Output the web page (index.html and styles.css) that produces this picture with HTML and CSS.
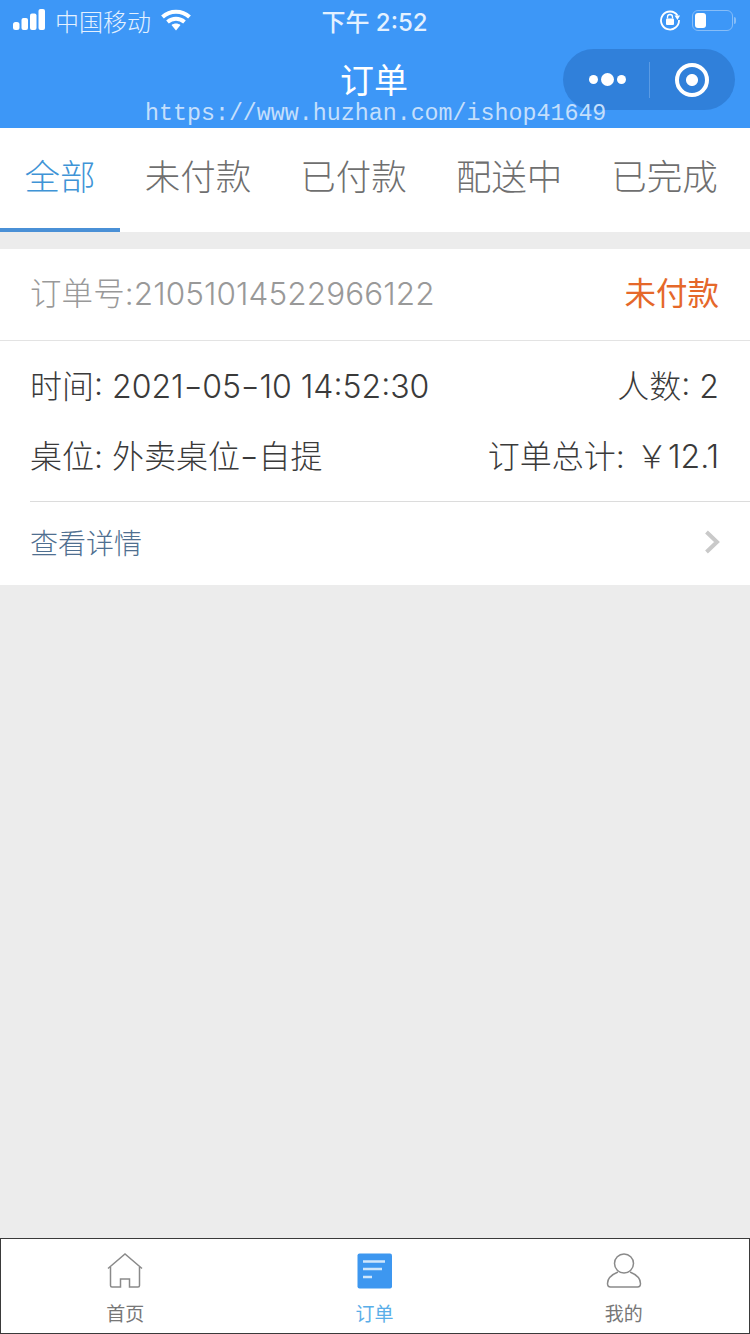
FILE: index.html
```html
<!DOCTYPE html>
<html lang="zh-CN">
<head>
    <meta charset="UTF-8">
    <meta name="viewport" content="width=device-width, initial-scale=1.0">
    <title>订单</title>
    <link rel="stylesheet" href="styles.css">
</head>
<body>
    <header class="top">
        <div class="status-bar">
            <div class="status-left">
                <svg class="signal" width="34" height="22" viewBox="0 0 34 22">
                    <rect x="0" y="13" width="6.500" height="8" rx="2.500" />
                    <rect x="8.500" y="9" width="6.500" height="12" rx="2" />
                    <rect x="17" y="4.500" width="6.500" height="16.500" rx="2" />
                    <rect x="25.500" y="0" width="6.500" height="21" rx="2" />
                </svg>
                <span>中国移动</span>
                <svg class="wifi" width="30" height="22" viewBox="0 0 30 22">
                    <path d="M1.500 8C9 1 21 1 28.500 8" />
                    <path d="M6.500 13C11.500 8.700 18.500 8.700 23.500 13" />
                    <path class="wifi-tip" d="M10.500 16C13 14 17 14 19.500 16L15 21.500Z" />
                </svg>
            </div>
            <div class="status-time">下午 2:52</div>
            <div class="status-right">
                <svg width="22" height="22" viewBox="0 0 22 22">
                    <path class="lock-ring" d="M18.500 6.500A9 9 0 1 0 20 11" />
                    <path class="lock-arrow" d="M15.500 6.500H21L18.500 11Z" />
                    <rect class="lock-body" x="7" y="9.500" width="8" height="6.500" rx="1" />
                    <path class="lock-ring thin" d="M8.500 9.500V8A2.500 2.500 0 0 1 13.500 8V9.500" />
                </svg>
                <div class="battery"><div class="battery-level"></div></div>
                <div class="battery-tip"></div>
            </div>
        </div>
        <div class="nav-bar">订单</div>
        <div class="capsule">
            <div class="capsule-dots"><i></i><i class="big"></i><i></i></div>
            <div class="capsule-line"></div>
            <div class="capsule-target"><i></i></div>
        </div>
        <div class="mark">https://www.huzhan.com/ishop41649</div>
    </header>

    <nav class="tabs">
        <div class="tab active">全部</div>
        <div class="tab">未付款</div>
        <div class="tab">已付款</div>
        <div class="tab">配送中</div>
        <div class="tab">已完成</div>
    </nav>

    <main class="list">
        <section class="order">
            <div class="order-head">
                <span class="order-no">订单号:21051014522966122</span>
                <span class="order-state">未付款</span>
            </div>
            <div class="order-body">
                <div class="order-row">
                    <span>时间: 2021<span class="dash">-</span>05<span class="dash">-</span>10 14:52:30</span>
                    <span>人数: 2</span>
                </div>
                <div class="order-row">
                    <span>桌位: 外卖桌位<span class="dash">-</span>自提</span>
                    <span>订单总计: <span class="yen">￥</span>12.1</span>
                </div>
            </div>
            <div class="order-foot">
                <span>查看详情</span>
                <svg width="16" height="24" viewBox="0 0 16 24">
                    <path d="M2.500 2L13 12L2.500 22" />
                </svg>
            </div>
        </section>
    </main>

    <footer class="tabbar">
        <div class="tabbar-item">
            <svg width="36" height="36" viewBox="0 0 36 36" class="line-icon">
                <path d="M1 15.500L18 1L35 15.500" />
                <path d="M3.500 14V32.500Q3.500 34 5 34H13.500V26H22.500V34H31Q32.500 34 32.500 32.500V14" />
            </svg>
            <span>首页</span>
        </div>
        <div class="tabbar-item current">
            <svg width="36" height="36" viewBox="0 0 36 36">
                <rect class="doc" x="1.500" y="0.500" width="34.500" height="35" rx="2" />
                <path class="doc-line" d="M7 8.500H29M7 16H26M7 24H16" />
            </svg>
            <span>订单</span>
        </div>
        <div class="tabbar-item">
            <svg width="36" height="36" viewBox="0 0 36 36" class="line-icon">
                <ellipse cx="18" cy="10.500" rx="9.500" ry="9.500" />
                <path d="M12 19C6 21.500 1.500 25.500 1.500 30.500Q1.500 34 4.500 34H31.500Q34.500 34 34.500 30.500C34.500 25.500 30 21.500 24 19" />
            </svg>
            <span>我的</span>
        </div>
    </footer>
</body>
</html>
```

FILE: styles.css
```css
html, body {
    margin: 0;
    padding: 0;
}

body {
    width: 750px;
    height: 1334px;
    display: flex;
    flex-direction: column;
    overflow: hidden;
    background-color: #ececec;
    font-family: Inter, "Noto Sans CJK SC", sans-serif;
}

/* Cabecera azul */
.top {
    position: relative;
    height: 128px;
    flex: none;
    background-color: #3d97f7;
    color: #fff;
}

.status-bar {
    height: 40px;
    padding: 0 14px 0 13px;
    display: grid;
    grid-template-columns: 1fr auto 1fr;
    align-items: center;
    font-size: 24px;
    font-weight: 300;
    color: #e4f1ff;
}

.status-left {
    display: flex;
    align-items: center;
}

.signal {
    fill: #fff;
    margin-right: 8px;
}

.wifi {
    margin-left: 10px;
    fill: none;
    stroke: #fff;
    stroke-width: 4;
}

.wifi-tip {
    fill: #fff;
    stroke: none;
}

.status-time {
    font-weight: 500;
}

.status-right {
    display: flex;
    align-items: center;
    justify-content: flex-end;
}

.status-right svg {
    margin-right: 11px;
}

.lock-ring {
    fill: none;
    stroke: #fff;
    stroke-width: 1.800;
}

.lock-ring.thin {
    stroke-width: 1.300;
}

.lock-arrow,
.lock-body {
    fill: #fff;
}

.battery {
    width: 41px;
    height: 21px;
    box-sizing: border-box;
    border: 1.500px solid #86bdf8;
    border-radius: 6px;
    padding: 2px;
}

.battery-level {
    width: 11px;
    height: 100%;
    background-color: #fff;
    border-radius: 3px;
}

.battery-tip {
    width: 2px;
    height: 7px;
    margin-left: 1px;
    background-color: #86bdf8;
    border-radius: 0 2px 2px 0;
}

.nav-bar {
    height: 80px;
    display: flex;
    align-items: center;
    justify-content: center;
    font-size: 34px;
    font-weight: 400;
    padding: 0 2px 4px 0;
    box-sizing: border-box;
}

.capsule {
    position: absolute;
    top: 49px;
    left: 563px;
    width: 172px;
    height: 61px;
    display: flex;
    align-items: center;
    background-color: #3080da;
    border-radius: 31px;
}

.capsule-dots {
    width: 86px;
    display: flex;
    align-items: center;
    justify-content: center;
    gap: 3px;
    padding-left: 3px;
    box-sizing: border-box;
}

.capsule-dots i {
    width: 9px;
    height: 9px;
    background-color: #fff;
    border-radius: 50%;
}

.capsule-dots i.big {
    width: 13px;
    height: 13px;
}

.capsule-line {
    width: 1px;
    height: 36px;
    background-color: #5a9be4;
}

.capsule-target {
    flex: 1;
    display: flex;
    align-items: center;
    justify-content: center;
    padding-right: 2px;
}

.capsule-target i {
    width: 34px;
    height: 34px;
    box-sizing: border-box;
    border: 4px solid #fff;
    border-radius: 50%;
    background: radial-gradient(circle, #fff 0, #fff 5.500px, transparent 6.500px);
}

/* Marca de agua sobre la cabecera */
.mark {
    position: absolute;
    top: 100px;
    left: 145px;
    font-family: "Liberation Mono", monospace;
    font-size: 23.300px;
    line-height: 28px;
    color: #c4dffc;
    white-space: nowrap;
}

/* Pestañas */
.tabs {
    height: 104px;
    flex: none;
    display: flex;
    gap: 0.500px;
    background-color: #fff;
}

.tab {
    height: 100%;
    box-sizing: border-box;
    padding: 0 24.250px 12px;
    display: flex;
    align-items: center;
    font-size: 35.500px;
    font-weight: 300;
    color: #6f6f6f;
}

.tab.active {
    padding: 0 24.500px 8px;
    color: #3f94d6;
    border-bottom: 4px solid #4a90d6;
}

.list {
    flex: 1;
    padding-top: 17px;
}

.order {
    background-color: #fff;
}

.order-head {
    height: 92px;
    box-sizing: border-box;
    padding: 0 31px 8px 30px;
    display: flex;
    align-items: center;
    justify-content: space-between;
    border-bottom: 1px solid #e3e3e3;
    font-size: 31.500px;
    font-weight: 300;
}

.order-no {
    color: #999;
    letter-spacing: 0.100px;
}

.order-state {
    color: #e5682a;
    font-weight: 400;
}

.order-body {
    margin-left: 30px;
    padding: 10px 31px 10px 0;
    border-bottom: 1px solid #dcdcdc;
}

.order-row {
    height: 70px;
    box-sizing: border-box;
    padding-bottom: 5px;
    display: flex;
    align-items: center;
    justify-content: space-between;
    font-size: 32px;
    font-weight: 300;
    color: #3a3a3a;
}

/* Guion largo de las fechas */
.dash {
    display: inline-block;
    margin: 0 2px;
    transform: scaleX(1.300);
}

.yen {
    margin-left: 2px;
}

.order-foot {
    height: 83px;
    box-sizing: border-box;
    padding: 0 30px 3px;
    display: flex;
    align-items: center;
    justify-content: space-between;
    font-size: 28px;
    font-weight: 300;
    color: #4f6f90;
}

.order-foot path {
    fill: none;
    stroke: #c9c9c9;
    stroke-width: 4;
}

/* Barra inferior */
.tabbar {
    height: 96px;
    flex: none;
    box-sizing: border-box;
    display: grid;
    grid-template-columns: repeat(3, 1fr);
    background-color: #fff;
    border: 1px solid #3a3a3a;
}

.tabbar-item {
    display: flex;
    flex-direction: column;
    align-items: center;
    padding: 14px 1px 0 0;
    font-size: 19px;
    color: #777;
}

.tabbar-item span {
    margin-top: 10px;
}

.tabbar-item.current {
    color: #5aaee8;
}

.line-icon path,
.line-icon ellipse {
    fill: none;
    stroke: #8a8a8a;
    stroke-width: 1.500;
}

.doc {
    fill: #3d97f0;
}

.doc-line {
    fill: none;
    stroke: #cfe6fb;
    stroke-width: 2.500;
}
```
